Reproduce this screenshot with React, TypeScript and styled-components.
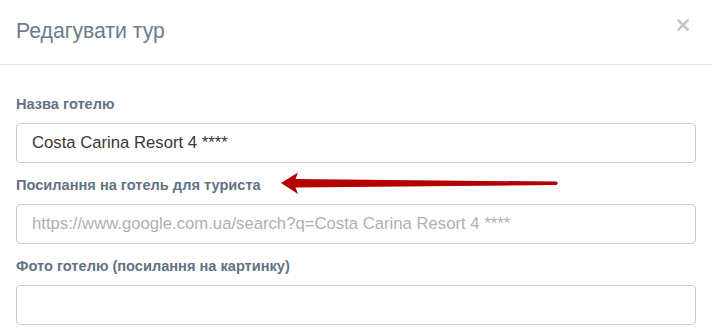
import React from "react";
import styled, { createGlobalStyle } from "styled-components";

const GlobalStyle = createGlobalStyle`
  * {
    box-sizing: border-box;
  }
  body {
    margin: 0;
    background: #ffffff;
    font-family: "Liberation Sans", Arial, sans-serif;
  }
`;

const fields = [
  { label: "Назва готелю", value: "Costa Carina Resort 4 ****", placeholder: "" },
  {
    label: "Посилання на готель для туриста",
    value: "",
    placeholder: "https://www.google.com.ua/search?q=Costa Carina Resort 4 ****",
  },
  { label: "Фото готелю (посилання на картинку)", value: "", placeholder: "" },
];

const App = () => {
  return (
    <>
      <GlobalStyle />
      <Modal>
        <Header>
          <Title>Редагувати тур</Title>
          <CloseButton aria-label="Закрити">
            <svg width="12" height="12" viewBox="0 0 12 12">
              <path
                d="M1.5 1.5 L10.5 10.5 M10.5 1.5 L1.5 10.5"
                stroke="#c6c6c6"
                strokeWidth="2.6"
                strokeLinecap="square"
              />
            </svg>
          </CloseButton>
        </Header>
        <Body>
          {fields.map((f) => (
            <FormGroup key={f.label}>
              <Label>{f.label}</Label>
              <Input defaultValue={f.value} placeholder={f.placeholder} />
            </FormGroup>
          ))}
          <Pointer width="712" height="333" viewBox="0 0 712 333">
            <path
              d="M281 183 L298 172.5 L295.5 179 L556 181.6 A1.7 1.7 0 0 1 556 185 L295.5 187.5 L298 194 Z"
              fill="#b40000"
            />
          </Pointer>
        </Body>
      </Modal>
    </>
  );
};

export default App;

const Modal = styled.div`
  position: relative;
  width: 100%;
  height: 333px;
  overflow: hidden;
  background: #ffffff;
`;

const Header = styled.div`
  display: flex;
  justify-content: space-between;
  align-items: flex-start;
  height: 65px;
  padding: 17px 23px 0 16px;
  border-bottom: 1px solid #e5e5e5;
`;

const Title = styled.h4`
  margin: 0;
  font-size: 21.2px;
  line-height: 28px;
  font-weight: normal;
  color: #6d7b8c;
`;

const CloseButton = styled.button`
  display: flex;
  padding: 0;
  margin-top: 2px;
  border: 0;
  background: transparent;
  cursor: pointer;
`;

const Body = styled.div`
  padding: 29px 16px 0 16px;
`;

const FormGroup = styled.div`
  display: flex;
  flex-direction: column;
  margin-bottom: 12px;
`;

const Label = styled.label`
  font-size: 14.6px;
  line-height: 20px;
  font-weight: bold;
  color: #627285;
  margin-bottom: 9px;
`;

const Input = styled.input`
  width: 100%;
  height: 40px;
  padding: 0 15px;
  border: 1px solid #cccccc;
  border-radius: 4px;
  font-family: "Liberation Sans", Arial, sans-serif;
  font-size: 16.7px;
  color: #383838;
  outline: none;
  &::placeholder {
    color: #b0b0b0;
  }
`;

const Pointer = styled.svg`
  position: absolute;
  left: 0;
  top: 0;
  pointer-events: none;
`;
